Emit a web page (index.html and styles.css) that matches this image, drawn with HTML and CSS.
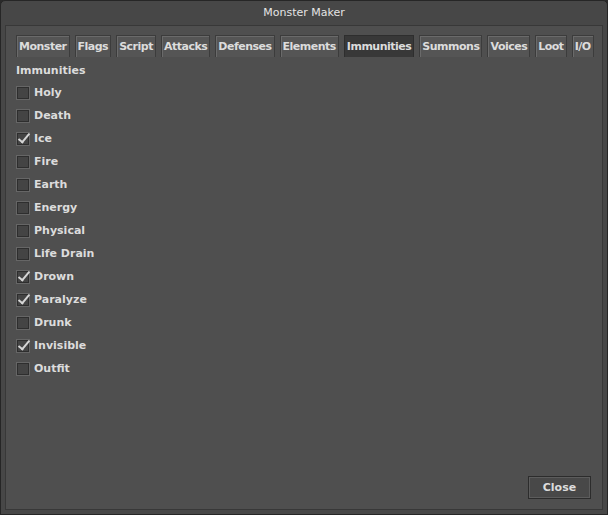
FILE: index.html
```html
<!DOCTYPE html>
<html lang="en">
<head>
    <meta charset="UTF-8">
    <title>Monster Maker</title>
    <link rel="stylesheet" href="styles.css">
</head>
<body>
    <div class="window">
        <div class="titlebar">Monster Maker</div>
        <div class="panel">
            <div class="tabs">
                <div class="tab">Monster</div>
                <div class="tab">Flags</div>
                <div class="tab">Script</div>
                <div class="tab">Attacks</div>
                <div class="tab">Defenses</div>
                <div class="tab">Elements</div>
                <div class="tab active">Immunities</div>
                <div class="tab">Summons</div>
                <div class="tab">Voices</div>
                <div class="tab">Loot</div>
                <div class="tab">I/O</div>
            </div>

            <div class="section-label">Immunities</div>
            <ul class="checklist">
                <li><span class="box"></span>Holy</li>
                <li><span class="box"></span>Death</li>
                <li><span class="box checked"></span>Ice</li>
                <li><span class="box"></span>Fire</li>
                <li><span class="box"></span>Earth</li>
                <li><span class="box"></span>Energy</li>
                <li><span class="box"></span>Physical</li>
                <li><span class="box"></span>Life Drain</li>
                <li><span class="box checked"></span>Drown</li>
                <li><span class="box checked"></span>Paralyze</li>
                <li><span class="box"></span>Drunk</li>
                <li><span class="box checked"></span>Invisible</li>
                <li><span class="box"></span>Outfit</li>
            </ul>

            <div class="footer">
                <button class="close-button">Close</button>
            </div>
        </div>
    </div>
</body>
</html>
```

FILE: styles.css
```css
* {
    box-sizing: border-box;
}
body {
    margin: 0;
    background: #2a2a2a;
    font-family: "DejaVu Sans", Verdana, sans-serif;
    font-size: 11px;
    font-weight: bold;
    color: #dcdcdc;
}
.window {
    width: 608px;
    height: 515px;
    display: flex;
    flex-direction: column;
    background: #474747;
    border: 1px solid #262626;
    border-radius: 5px 5px 0 0;
}
.titlebar {
    height: 24px;
    line-height: 24px;
    text-align: center;
    font-weight: normal;
    font-size: 11px;
    color: #e4e4e4;
}
.panel {
    flex: 1;
    margin: 0 4px 4px 4px;
    display: flex;
    flex-direction: column;
    background: #4f4f4f;
    border: 1px solid #383838;
    padding: 9px 10px 10px 10px;
}
.tabs {
    display: flex;
    gap: 5px;
}
.tab {
    height: 22px;
    line-height: 21px;
    padding: 0 2px;
    letter-spacing: -0.5px;
    background: #555;
    border: 1px solid #3c3c3c;
    border-bottom: none;
    box-shadow: inset 1px 1px 0 #6a6a6a;
}
.tab.active {
    background: #383838;
    box-shadow: none;
    border-color: #2e2e2e;
}
.section-label {
    margin-top: 7px;
    height: 13px;
    line-height: 13px;
}
.checklist {
    list-style: none;
    margin: 4px 0 0 0;
    padding: 0;
}
.checklist li {
    display: flex;
    align-items: center;
    gap: 4px;
    height: 23px;
}
.box {
    position: relative;
    width: 14px;
    height: 14px;
    background: #444;
    border: 1px solid #666;
    box-shadow: inset 0 0 0 1px #2e2e2e;
}
.box.checked::after {
    content: "";
    position: absolute;
    left: 4px;
    top: -2px;
    width: 4px;
    height: 10px;
    border: solid #d6d6d6;
    border-width: 0 2px 2px 0;
    transform: rotate(40deg);
}
.footer {
    margin-top: auto;
    display: flex;
    justify-content: flex-end;
    padding-right: 1px;
}
.close-button {
    width: 63px;
    height: 23px;
    font-family: inherit;
    font-size: 11px;
    font-weight: bold;
    color: #dcdcdc;
    background: #484848;
    border: 1px solid #2c2c2c;
    box-shadow: inset 0 0 0 1px #5c5c5c;
}
```
